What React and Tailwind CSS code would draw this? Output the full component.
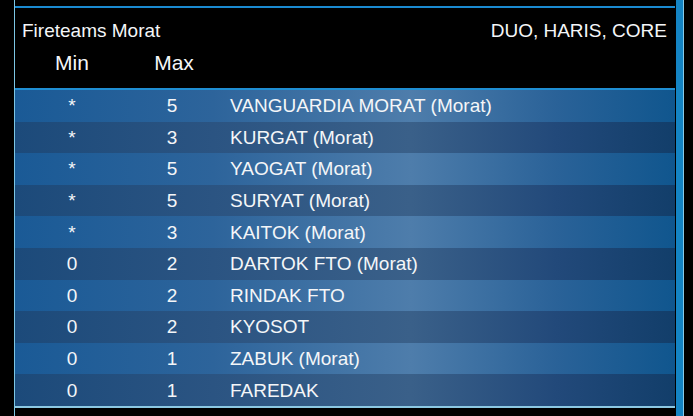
import React from "react";

const rows = [
  ["*", "5", "VANGUARDIA MORAT (Morat)"],
  ["*", "3", "KURGAT (Morat)"],
  ["*", "5", "YAOGAT (Morat)"],
  ["*", "5", "SURYAT (Morat)"],
  ["*", "3", "KAITOK (Morat)"],
  ["0", "2", "DARTOK FTO (Morat)"],
  ["0", "2", "RINDAK FTO"],
  ["0", "2", "KYOSOT"],
  ["0", "1", "ZABUK (Morat)"],
  ["0", "1", "FAREDAK"],
];

export default function App() {
  return (
    <div
      className="flex h-[416px] w-[693px] bg-black text-[19px] text-[#f4f6f8]"
      style={{ fontFamily: '"Liberation Sans", Arial, sans-serif' }}
    >
      <div className="w-[14px] bg-black" />
      <div className="w-px bg-[#7cc6e4]" />
      <div className="flex w-[660px] flex-col">
        <div className="h-[6px] bg-black" />
        <div className="h-[2px] bg-[#1a8ad0]" />
        <div className="flex h-[80px] flex-col bg-black pt-[11px]">
          <div className="flex h-[22px] items-center justify-between pl-[7px] pr-[8px] leading-none">
            <span>Fireteams Morat</span>
            <span>DUO, HARIS, CORE</span>
          </div>
          <div className="mt-[10px] flex h-[22px] items-center text-[21px] leading-none">
            <div className="w-[114px] text-center">Min</div>
            <div className="w-[90px] text-center">Max</div>
          </div>
        </div>
        <div className="h-[2px] bg-[#1f8ed2]" />
        <div className="flex flex-col">
          {rows.map((r, i) => (
            <div
              key={i}
              className={
                "flex h-[31.6px] items-center leading-none " +
                (i % 2 === 0
                  ? "bg-[linear-gradient(90deg,#1a5a96_0%,#2d649b_30%,#4e7dab_60%,#2a6298_82%,#10568e_100%)]"
                  : "bg-[linear-gradient(90deg,#1c4a7a_0%,#2b5482_30%,#3a6089_60%,#22497a_82%,#123e6a_100%)]")
              }
            >
              <div className="w-[114px] text-center">{r[0]}</div>
              <div className="w-[86px] text-center">{r[1]}</div>
              <div className="pl-[15px]">{r[2]}</div>
            </div>
          ))}
        </div>
        <div className="h-[2px] bg-[#8cc8e2]" />
        <div className="flex-1 bg-black" />
      </div>
      <div className="w-px bg-black" />
      <div className="w-[7px] bg-[#1484c4]" />
      <div className="w-px bg-[#86cbea]" />
      <div className="flex-1 bg-black" />
    </div>
  );
}
